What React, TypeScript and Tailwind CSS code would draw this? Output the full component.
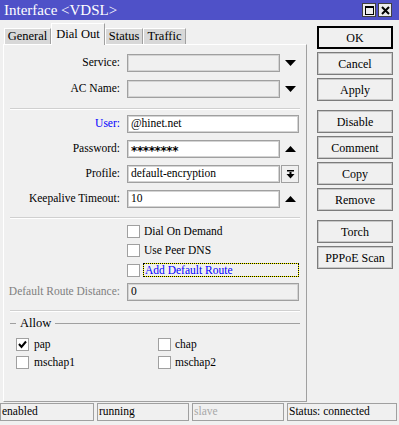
import React from "react";

const font = { fontFamily: '"Liberation Serif", "Times New Roman", serif' };

function DownTri() {
  return (
    <svg width="11" height="6" viewBox="0 0 11 6"><polygon points="0,0 11,0 5.5,6" fill="#000" /></svg>
  );
}
function UpTri() {
  return (
    <svg width="11" height="6" viewBox="0 0 11 6"><polygon points="0,6 11,6 5.5,0" fill="#000" /></svg>
  );
}

function Field({ value = "", disabled = false, w, stars = false }: { value?: string; disabled?: boolean; w: string; stars?: boolean }) {
  return (
    <div
      className={`${w} h-[18px] border border-[#a0a0a0] shadow-[inset_0_0_0_1px_#d4d4d4] flex items-center pl-[3px] overflow-hidden ${
        disabled ? "bg-[#f0f0f0]" : "bg-white"
      }`}
    >
      {stars ? (
        <span className="font-['DejaVu_Sans',sans-serif] font-bold text-[12px] leading-none translate-y-[2px] tracking-[-0.4px]">{value}</span>
      ) : (
        value
      )}
    </div>
  );
}

function Row({ label, children, mt, color = "text-black" }: { label: string; children: React.ReactNode; mt: string; color?: string }) {
  return (
    <div className={`flex items-center ${mt}`}>
      <div className={`w-[116px] text-right ${color} leading-none`}>{label}</div>
      <div className="ml-[7px] flex items-center">{children}</div>
    </div>
  );
}

function Sep({ mt }: { mt: string }) {
  return <div className={`${mt} mx-[6px] h-[2px] border-t border-[#d0d0d0] border-b border-b-white`} />;
}

function Check({ checked = false }: { checked?: boolean }) {
  return (
    <div className="w-[13px] h-[13px] border border-[#a0a0a0] bg-white flex items-center justify-center">
      {checked && (
        <svg width="9" height="9" viewBox="0 0 9 9">
          <polyline points="1,4 3.5,7 8,1.5" fill="none" stroke="#000" strokeWidth="2" />
        </svg>
      )}
    </div>
  );
}

function Btn({ label, mt = "mt-[3px]", primary = false }: { label: string; mt?: string; primary?: boolean }) {
  return (
    <div
      className={`${mt} h-[23px] w-[76px] flex items-center justify-center bg-[#f0f0f0] ${
        primary ? "border-2 border-black" : "border border-[#7c7c7c] shadow-[inset_0_0_0_1px_#c8c8c8]"
      }`}
    >
      {label}
    </div>
  );
}

function Tab({ label, active = false, w }: { label: string; active?: boolean; w: string }) {
  return (
    <div
      className={`${w} flex items-center justify-center border-t border-l border-r border-t-white border-l-white border-r-[#a0a0a0] ${
        active ? "h-[22px] bg-[#f0f0f0] -mb-px relative z-10 self-end" : "h-[16px] bg-[#d8d8d8] self-end"
      }`}
    >
      {label}
    </div>
  );
}

export default function App() {
  return (
    <div className="w-[399px] h-[425px] bg-[#f0f0f0] flex flex-col overflow-hidden text-[11.5px] text-black" style={font}>
      {/* title */}
      <div className="h-[20px] bg-[#4f51c8] flex items-center pl-[4px] pr-[7px] text-white text-[15px]">
        <span className="flex-1 leading-none">Interface &lt;VDSL&gt;</span>
        <div className="flex gap-[2px]">
          <div className="w-[14px] h-[14px] bg-[#ececec] border border-[#404040] flex items-center justify-center">
            <div className="w-[9px] h-[9px] border border-black border-t-2" />
          </div>
          <div className="w-[14px] h-[14px] bg-[#ececec] border border-[#404040] flex items-center justify-center">
            <svg width="9" height="9" viewBox="0 0 9 9">
              <path d="M1 1 L8 8 M8 1 L1 8" stroke="#000" strokeWidth="2" />
            </svg>
          </div>
        </div>
      </div>

      <div className="flex h-[383px]">
        {/* left: tabs + panel */}
        <div className="pl-[3px] pt-[3px] flex flex-col w-[307px]">
          <div className="flex h-[21px] items-end pl-px text-[12.5px]">
            <Tab label="General" w="w-[47px]" />
            <Tab label="Dial Out" w="w-[54px]" active />
            <Tab label="Status" w="w-[38px]" />
            <Tab label="Traffic" w="w-[43px]" />
          </div>
          <div className="h-[358px] w-[304px] border-t border-l border-t-white border-l-white border-r border-b border-r-[#a0a0a0] border-b-[#a0a0a0] flex flex-col">
            <Row label="Service:" mt="mt-[9px]">
              <Field w="w-[153px]" disabled />
              <div className="ml-[5px]"><DownTri /></div>
            </Row>
            <Row label="AC Name:" mt="mt-[8px]">
              <Field w="w-[153px]" disabled />
              <div className="ml-[5px]"><DownTri /></div>
            </Row>
            <Sep mt="mt-[10px]" />
            <Row label="User:" mt="mt-[5px]" color="text-[#0000ff]">
              <Field w="w-[172px]" value="@hinet.net" />
            </Row>
            <Row label="Password:" mt="mt-[7px]">
              <Field w="w-[153px]" value="********" stars />
              <div className="ml-[5px]"><UpTri /></div>
            </Row>
            <Row label="Profile:" mt="mt-[7px]">
              <Field w="w-[153px]" value="default-encryption" />
              <div className="ml-px w-[18px] h-[18px] border border-[#a0a0a0] bg-[#f0f0f0] flex items-center justify-center">
                <svg width="9" height="9" viewBox="0 0 9 9">
                  <rect x="1" y="0" width="7" height="1.5" fill="#000" />
                  <rect x="3.5" y="2" width="2" height="3" fill="#000" />
                  <polygon points="0.5,4 8.5,4 4.5,8.5" fill="#000" />
                </svg>
              </div>
            </Row>
            <Row label="Keepalive Timeout:" mt="mt-[7px]">
              <Field w="w-[153px]" value="10" />
              <div className="ml-[5px]"><UpTri /></div>
            </Row>
            <Sep mt="mt-[9px]" />
            <div className="flex items-center mt-[6px] pl-[123px]">
              <Check />
              <span className="ml-[4px] leading-none">Dial On Demand</span>
            </div>
            <div className="flex items-center mt-[6px] pl-[123px]">
              <Check />
              <span className="ml-[4px] leading-none">Use Peer DNS</span>
            </div>
            <div className="flex items-center mt-[6px] pl-[123px]">
              <Check />
              <div className="ml-[3px] w-[156px] h-[14px] bg-[#ffff00]">
                <div className="w-full h-full border border-dotted border-black">
                  <div className="w-full h-full bg-[#f0f0f0] text-[#0000ff] leading-[12px] pl-px">Add Default Route</div>
                </div>
              </div>
            </div>
            <Row label="Default Route Distance:" mt="mt-[6px]" color="text-[#808080]">
              <Field w="w-[172px]" value="0" disabled />
            </Row>
            <Sep mt="mt-[9px]" />
            <div className="mt-[4px] h-[14px] flex items-center pl-[6px] pr-[6px] text-[12.5px]">
              <div className="w-[6px] h-px bg-[#a0a0a0]" />
              <span className="px-[4px] leading-none">Allow</span>
              <div className="flex-1 h-px bg-[#a0a0a0]" />
            </div>
            <div className="mt-[8px] flex items-center pl-[12px]">
              <div className="w-[142px] flex items-center">
                <Check checked />
                <span className="ml-[5px] leading-none">pap</span>
              </div>
              <Check />
              <span className="ml-[4px] leading-none">chap</span>
            </div>
            <div className="mt-[5px] flex items-center pl-[12px]">
              <div className="w-[142px] flex items-center">
                <Check />
                <span className="ml-[5px] leading-none">mschap1</span>
              </div>
              <Check />
              <span className="ml-[4px] leading-none">mschap2</span>
            </div>
          </div>
        </div>

        {/* right: buttons */}
        <div className="ml-[10px] pt-[6px] flex flex-col text-[12px]">
          <Btn label="OK" mt="mt-0" primary />
          <Btn label="Cancel" />
          <Btn label="Apply" />
          <Btn label="Disable" mt="mt-[9px]" />
          <Btn label="Comment" />
          <Btn label="Copy" />
          <Btn label="Remove" />
          <Btn label="Torch" mt="mt-[9px]" />
          <Btn label="PPPoE Scan" />
        </div>
      </div>

      {/* status bar */}
      <div className="h-[18px] flex gap-[2px]">
        <div className="w-[94px] border border-[#a0a0a0] flex items-center pl-px leading-none">enabled</div>
        <div className="w-[92px] border border-[#a0a0a0] flex items-center pl-px leading-none ml-px">running</div>
        <div className="w-[92px] border border-[#a0a0a0] flex items-center pl-px leading-none text-[#a8a8a8] ml-px">slave</div>
        <div className="w-[110px] border border-[#a0a0a0] flex items-center pl-px leading-none ml-[1px]">Status: connected</div>
      </div>
    </div>
  );
}
